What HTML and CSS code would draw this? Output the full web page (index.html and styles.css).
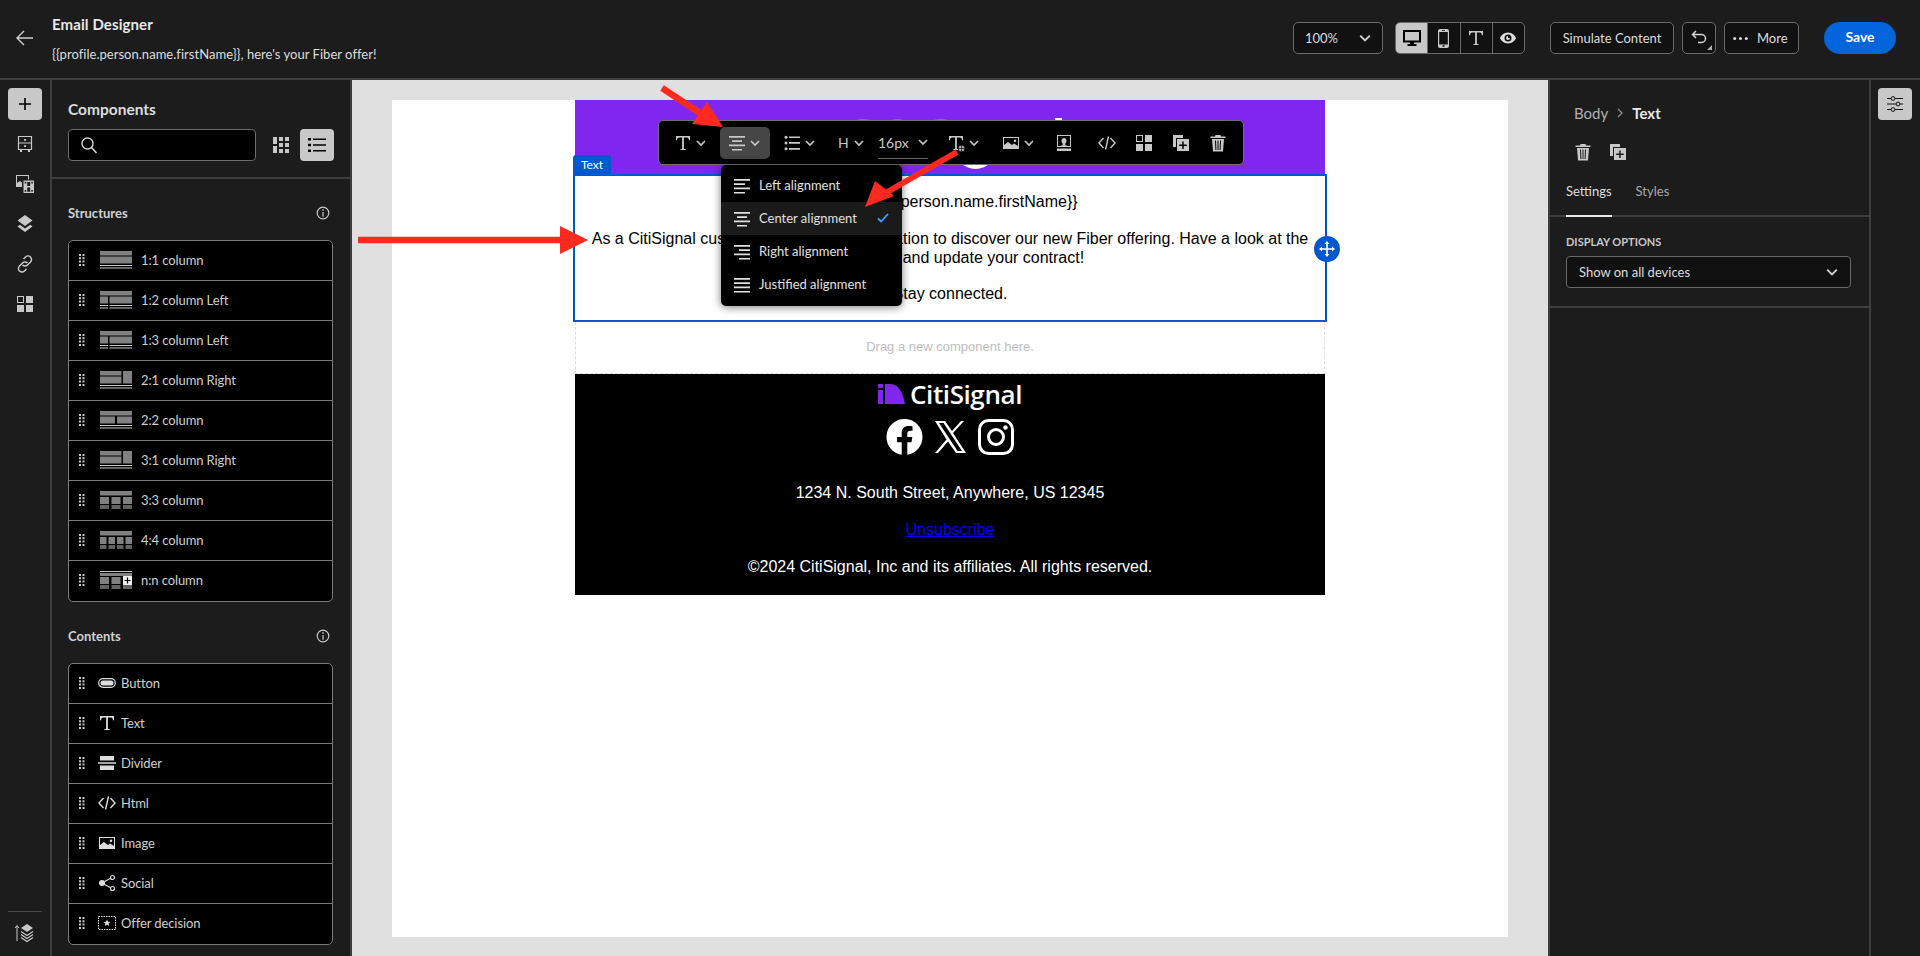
FILE: index.html

```html
<!DOCTYPE html>
<html lang="en">
<head>
  <meta charset="UTF-8">
  <meta name="viewport" content="width=device-width, initial-scale=1.0">
  <title>Email Designer</title>
  <link rel="stylesheet" href="styles.css">
</head>
<body>
  <!-- shared icons -->
  <svg class="defs">
    <symbol id="chev" viewBox="0 0 10 10"><path d="M1 3l4 4 4-4" fill="none" stroke="currentColor" stroke-width="1.600"/></symbol>
    <symbol id="t" viewBox="0 0 18 18"><path d="M2 2h14v4.200h-1c-.2-1.500-.8-2.600-2.200-2.600H9.900v11.200l1.800.4V16H6.300v-.8l1.800-.4V3.600H5.200C3.800 3.600 3.200 4.700 3 6.200H2z" fill="currentColor"/></symbol>
    <symbol id="al-left" viewBox="0 0 18 18"><path d="M1 2h16v1.700H1zM1 6.300h11v1.700H1zM1 10.600h16v1.700H1zM1 14.900h11v1.700H1z" fill="currentColor"/></symbol>
    <symbol id="al-center" viewBox="0 0 18 18"><path d="M1 2h16v1.700H1zM4 6.300h10v1.700H4zM1 10.600h16v1.700H1zM4 14.900h10v1.700H4z" fill="currentColor"/></symbol>
    <symbol id="al-right" viewBox="0 0 18 18"><path d="M1 2h16v1.700H1zM6 6.300h11v1.700H6zM1 10.600h16v1.700H1zM6 14.900h11v1.700H6z" fill="currentColor"/></symbol>
    <symbol id="al-just" viewBox="0 0 18 18"><path d="M1 2h16v1.700H1zM1 6.300h16v1.700H1zM1 10.600h16v1.700H1zM1 14.900h16v1.700H1z" fill="currentColor"/></symbol>
    <symbol id="list" viewBox="0 0 18 18"><path d="M0 2h3v2.500H0zM5 2.500h13V4H5zM0 7.800h3v2.500H0zM5 8.300h13v1.500H5zM0 13.500h3V16H0zM5 14h13v1.500H5z" fill="currentColor"/></symbol>
    <symbol id="bullets" viewBox="0 0 18 18"><circle cx="3" cy="3.200" r="1.500" fill="currentColor"/><circle cx="3" cy="9" r="1.500" fill="currentColor"/><circle cx="3" cy="14.800" r="1.500" fill="currentColor"/><path d="M6 2.400h11v1.700H6zM6 8.100h11v1.700H6zM6 14h11v1.700H6z" fill="currentColor"/></symbol>
    <symbol id="image" viewBox="0 0 18 18"><path fill-rule="evenodd" d="M1 3h16v12H1zM2 4v7l4-3 4 3 2-1.500 4 2.500V4zM13 5.500a1.300 1.300 0 110 2.600 1.300 1.300 0 010-2.600z" fill="currentColor"/></symbol>
    <symbol id="person" viewBox="0 0 18 18"><path fill-rule="evenodd" d="M2 1h14v12H2zM3 2v10h3c1-1 2-1 2-2-1-1-1.500-2-1.500-3.500C6.500 5 7.500 4 9 4s2.500 1 2.500 2.500c0 1.500-.5 2.500-1.500 3.500 0 1 1 1 2 2h3V2zM2 14.500h14V17H2z" fill="currentColor"/></symbol>
    <symbol id="code" viewBox="0 0 18 18"><path d="M5.500 4L1 9l4.500 5M12.500 4L17 9l-4.500 5M10.500 2.500L7.500 15.500" fill="none" stroke="currentColor" stroke-width="1.400"/></symbol>
    <symbol id="grid" viewBox="0 0 18 18"><path fill-rule="evenodd" d="M1 1h7v7H1zM2 2v5h5V2zM10 1h7v7h-7zM1 10h7v7H1zM10 10h7v7h-7z" fill="currentColor"/></symbol>
    <symbol id="copy" viewBox="0 0 18 18"><path fill-rule="evenodd" d="M1 1h10v3H4v9H1zM5 5h12v12H5zM10.200 7.500v3h-3V12h3v3h1.500v-3h3v-1.500h-3v-3z" fill="currentColor"/></symbol>
    <symbol id="trash" viewBox="0 0 18 18"><path fill-rule="evenodd" d="M6.500 1h5l.5 1.500h4.500V4h-15V2.500H6zM3 5h12l-1 12.500H4zM6 6.500l.4 9.500h1L7 6.500zM8.500 6.500V16h1V6.500zM11 6.500L10.600 16h1l.4-9.500z" fill="currentColor"/></symbol>
    <symbol id="info" viewBox="0 0 14 14"><circle cx="7" cy="7" r="5.800" fill="none" stroke="currentColor" stroke-width="1.200"/><path d="M6.300 3.300h1.400v1.400H6.300zM6.400 6h1.200v4.700H6.400z" fill="currentColor"/></symbol>
    <symbol id="drag" viewBox="0 0 6 12"><path d="M0 0h2v2H0zM3.500 0h2v2h-2zM0 3.300h2v2H0zM3.500 3.300h2v2h-2zM0 6.600h2v2H0zM3.500 6.600h2v2h-2zM0 9.900h2v2H0zM3.500 9.900h2v2h-2z" fill="#c8c8c8"/></symbol>

    <symbol id="st-1" viewBox="0 0 32 18"><path d="M0 0h32v4.500H0zM0 5.500h32v7H0z" fill="#808080"/><path d="M0 14h32v1H0zM0 16.500h32v1H0z" fill="#c4c4c4"/></symbol>
    <symbol id="st-12" viewBox="0 0 32 18"><path d="M0 0h32v4.500H0zM0 5.500h8v7H0zM9.500 5.500H32v7H9.500z" fill="#808080"/><path d="M0 14h8v1H0zM0 16.500h8v1H0zM9.500 14H32v1H9.500zM9.500 16.500H32v1H9.500z" fill="#c4c4c4"/></symbol>
    <symbol id="st-21" viewBox="0 0 32 18"><path d="M0 0h21.500v4.500H0zM23 0h9v12.500h-9zM0 5.500h21.500v7H0z" fill="#808080"/><path d="M0 14h32v1H0zM0 16.500h32v1H0z" fill="#c4c4c4"/></symbol>
    <symbol id="st-22" viewBox="0 0 32 18"><path d="M0 0h32v4.500H0zM0 5.500h15v7H0zM17 5.500h15v7H17z" fill="#808080"/><path d="M0 14h32v1H0zM0 16.500h32v1H0z" fill="#c4c4c4"/></symbol>
    <symbol id="st-33" viewBox="0 0 32 18"><path d="M0 0h32v4.500H0zM0 6h9v7H0zM11.500 6h9v7h-9zM23 6h9v7h-9z" fill="#808080"/><path d="M0 14.500h9v1H0zM0 16.500h9v1H0zM11.500 14.500h9v1h-9zM11.500 16.500h9v1h-9zM23 14.500h9v1h-9zM23 16.500h9v1h-9z" fill="#c4c4c4"/></symbol>
    <symbol id="st-44" viewBox="0 0 32 18"><path d="M0 0h32v4.500H0zM0 6h6.500v7H0zM8.500 6H15v7H8.500zM17 6h6.500v7H17zM25.500 6H32v7h-6.500z" fill="#808080"/><path d="M0 14.500h6.500v1H0zM0 16.500h6.500v1H0zM8.500 14.500H15v1H8.500zM8.500 16.500H15v1H8.500zM17 14.500h6.500v1H17zM17 16.500h6.500v1H17zM25.500 14.500H32v1h-6.500zM25.500 16.500H32v1h-6.500z" fill="#c4c4c4"/></symbol>
    <symbol id="st-nn" viewBox="0 0 32 18"><path d="M0 2h32v3H0zM0 6h9v7H0zM11.500 6h9v7h-9z" fill="#808080"/><path d="M0 0h32v1H0zM0 14.500h9v1H0zM0 16.500h9v1H0zM11.500 14.500h9v1h-9zM11.500 16.500h9v1h-9zM23 14.500h9v1h-9zM23 16.500h9v1h-9z" fill="#c4c4c4"/><path fill-rule="evenodd" d="M23 5h9v9h-9zM26.900 6.500v2.400h-2.400v1.200h2.400v2.400h1.200v-2.400h2.400V8.900h-2.400V6.500z" fill="#eee"/></symbol>
  </svg>

  <header class="topbar">
    <svg class="back" width="18" height="16" viewBox="0 0 18 16"><path d="M8 1L1 8l7 7M1 8h16" fill="none" stroke="#d0d0d0" stroke-width="1.400"/></svg>
    <div class="titles">
      <div class="app-title">Email Designer</div>
      <div class="subject">{{profile.person.name.firstName}}, here's your Fiber offer!</div>
    </div>
    <div class="top-actions">
      <div class="btn zoom-select">100% <svg class="chev-lg"><use href="#chev"/></svg></div>
      <div class="device-group">
        <span class="device on">
          <svg width="18" height="18" viewBox="0 0 18 18"><path fill-rule="evenodd" d="M0 1h18v12.500H11V15h2.500v2h-9v-2H7v-1.500H0zM2 3v8.500h14V3z" fill="#000"/></svg>
        </span>
        <span class="device">
          <svg width="11" height="19" viewBox="0 0 11 19"><path fill-rule="evenodd" d="M2 0h7a2 2 0 012 2v15a2 2 0 01-2 2H2a2 2 0 01-2-2V2a2 2 0 012-2zM1.200 3v12.500h8.600V3zM4 1.200v.8h3v-.8zM4.500 16.300v1.500h2v-1.500z" fill="#c8c8c8"/></svg>
        </span>
        <span class="device"><svg width="18" height="18"><use href="#t"/></svg></span>
        <span class="device">
          <svg width="18" height="18" viewBox="0 0 18 18"><path fill-rule="evenodd" d="M9 3.500c4 0 7 3 8 5.500-1 2.500-4 5.500-8 5.500S2 11.500 1 9c1-2.500 4-5.500 8-5.500zM9 5.500a3.500 3.500 0 100 7 3.500 3.500 0 000-7z" fill="#dcdcdc"/><path d="M9 7v2h2a2 2 0 11-2-2z" fill="#dcdcdc"/></svg>
        </span>
      </div>
      <div class="btn simulate">Simulate Content</div>
      <div class="btn undo">
        <svg width="18" height="18" viewBox="0 0 18 18"><path d="M6 2L2.500 5.500 6 9M3 5.500h8.500a4 4 0 010 8H8" fill="none" stroke="#d5d5d5" stroke-width="1.500"/></svg>
        <i class="corner"></i>
      </div>
      <div class="btn more">
        <svg width="15" height="5" viewBox="0 0 15 5"><circle cx="1.700" cy="2.500" r="1.500" fill="#dcdcdc"/><circle cx="7.500" cy="2.500" r="1.500" fill="#dcdcdc"/><circle cx="13.300" cy="2.500" r="1.500" fill="#dcdcdc"/></svg>
        More
      </div>
      <div class="save">Save</div>
    </div>
  </header>

  <main class="workspace">
    <nav class="rail">
      <div class="rail-btn on"><svg width="14" height="14" viewBox="0 0 14 14"><path d="M6.200 1h1.600v5.200H13v1.600H7.800V13H6.200V7.800H1V6.200h5.200z" fill="#000"/></svg></div>
      <div class="rail-btn">
        <svg width="18" height="18" viewBox="0 0 18 18"><path d="M2.500 1.500h13v13h-13zM2.500 8h13" fill="none" stroke="#c8c8c8" stroke-width="1.200"/><path d="M8 4h2v1.700H8zM8 10.300h2V12H8zM4 15h2v2H4zM12 15h2v2h-2z" fill="#c8c8c8"/></svg>
      </div>
      <div class="rail-btn">
        <svg width="18" height="18" viewBox="0 0 18 18"><path d="M0 0h13v4.500h-1V1H1v7l3-2 2 1.500V12H0z" fill="#c8c8c8"/><path fill-rule="evenodd" d="M7.500 5.500H18V18H7.500zM8.700 6.800v1.700h1.500V6.800zM15.300 6.800v1.700h1.500V6.800zM8.700 15v1.700h1.500V15zM15.300 15v1.700h1.500V15zM11.200 7v4h3V7zM11.200 12.500v4.200h3v-4.200z" fill="#c8c8c8"/></svg>
      </div>
      <div class="rail-btn">
        <svg width="18" height="20" viewBox="0 0 18 20"><path d="M9 1l7.500 5.500L9 12 1.500 6.500z" fill="#c8c8c8"/><path d="M1.500 12.500l2.300-1.700L9 14.600l5.200-3.800 2.300 1.700L9 18z" fill="#c8c8c8"/></svg>
      </div>
      <div class="rail-btn">
        <svg width="18" height="18" viewBox="0 0 18 18"><path d="M7.500 4l2-2a3.500 3.500 0 015 5l-3 3a3.500 3.500 0 01-5 0M10.500 14l-2 2a3.500 3.500 0 01-5-5l3-3a3.500 3.500 0 015 0" fill="none" stroke="#c8c8c8" stroke-width="1.500"/></svg>
      </div>
      <div class="rail-btn"><svg class="rail-grid" width="18" height="18"><use href="#grid"/></svg></div>
      <div class="rail-foot">
        <svg width="20" height="20" viewBox="0 0 20 20"><path d="M2 3v15M0 5l2-2.500L4 5" fill="none" stroke="#c8c8c8" stroke-width="1"/><path d="M12 1l6 4-6 4-6-4z" fill="#c8c8c8"/><path d="M6 8.500l6 4 6-4M6 11.500l6 4 6-4M6 14.500l6 4 6-4" fill="none" stroke="#c8c8c8" stroke-width="1.200"/></svg>
      </div>
    </nav>

    <aside class="components">
      <div class="comp-head">
        <div class="comp-title">Components</div>
        <div class="search-row">
          <div class="search">
            <svg width="18" height="18" viewBox="0 0 18 18"><circle cx="7.500" cy="7.500" r="5.500" fill="none" stroke="#d5d5d5" stroke-width="1.400"/><path d="M11.500 11.500l5 5.500" stroke="#d5d5d5" stroke-width="1.600"/></svg>
          </div>
          <svg class="view-grid" width="16" height="16" viewBox="0 0 16 16"><path d="M0 0h4v7H0zM6 0h4v4H6zM12 0h4v4h-4zM6 6h4v4H6zM12 6h4v4h-4zM0 9h4v7H0zM6 12h4v4H6zM12 12h4v4h-4z" fill="#c8c8c8"/></svg>
          <div class="view-list"><svg width="18" height="18"><use href="#list"/></svg></div>
        </div>
      </div>

      <div class="section">
        <div class="section-head">Structures <svg class="info"><use href="#info"/></svg></div>
        <ul class="items">
          <li><svg class="drag"><use href="#drag"/></svg><svg class="st"><use href="#st-1"/></svg>1:1 column</li>
          <li><svg class="drag"><use href="#drag"/></svg><svg class="st"><use href="#st-12"/></svg>1:2 column Left</li>
          <li><svg class="drag"><use href="#drag"/></svg><svg class="st"><use href="#st-12"/></svg>1:3 column Left</li>
          <li><svg class="drag"><use href="#drag"/></svg><svg class="st"><use href="#st-21"/></svg>2:1 column Right</li>
          <li><svg class="drag"><use href="#drag"/></svg><svg class="st"><use href="#st-22"/></svg>2:2 column</li>
          <li><svg class="drag"><use href="#drag"/></svg><svg class="st"><use href="#st-21"/></svg>3:1 column Right</li>
          <li><svg class="drag"><use href="#drag"/></svg><svg class="st"><use href="#st-33"/></svg>3:3 column</li>
          <li><svg class="drag"><use href="#drag"/></svg><svg class="st"><use href="#st-44"/></svg>4:4 column</li>
          <li><svg class="drag"><use href="#drag"/></svg><svg class="st"><use href="#st-nn"/></svg>n:n column</li>
        </ul>

        <div class="section-head second">Contents <svg class="info"><use href="#info"/></svg></div>
        <ul class="items contents">
          <li><svg class="drag"><use href="#drag"/></svg>
            <svg class="ci" viewBox="0 0 18 18"><rect x="0.700" y="4.700" width="16.600" height="8.600" rx="4.300" fill="none" stroke="#ddd" stroke-width="1.200"/><rect x="2.500" y="6.500" width="13" height="5" rx="2.500" fill="#ddd"/></svg>Button</li>
          <li><svg class="drag"><use href="#drag"/></svg><svg class="ci"><use href="#t"/></svg>Text</li>
          <li><svg class="drag"><use href="#drag"/></svg>
            <svg class="ci" viewBox="0 0 18 18"><path d="M2 2h14v4.500H2zM0 8.200h18v1.600H0zM2 11.500h14V16H2z" fill="#ddd"/></svg>Divider</li>
          <li><svg class="drag"><use href="#drag"/></svg><svg class="ci"><use href="#code"/></svg>Html</li>
          <li><svg class="drag"><use href="#drag"/></svg><svg class="ci"><use href="#image"/></svg>Image</li>
          <li><svg class="drag"><use href="#drag"/></svg>
            <svg class="ci" viewBox="0 0 18 18"><path d="M4 9L13 4M4 9l9 5" stroke="#ddd" stroke-width="1.300"/><circle cx="4" cy="9" r="3" fill="#ddd"/><circle cx="14.500" cy="3.500" r="2" fill="#000" stroke="#ddd" stroke-width="1.200"/><circle cx="14.500" cy="14.500" r="2" fill="#000" stroke="#ddd" stroke-width="1.200"/></svg>Social</li>
          <li><svg class="drag"><use href="#drag"/></svg>
            <svg class="ci" viewBox="0 0 18 18"><rect x="0.500" y="2.500" width="17" height="13" fill="none" stroke="#ddd" stroke-dasharray="1.500 1"/><path d="M9 5.500l1 2.300 2.500.2-1.900 1.600.6 2.400L9 10.700 6.800 12l.6-2.400L5.500 8 8 7.800z" fill="#ddd"/></svg>Offer decision</li>
        </ul>
      </div>
    </aside>

    <section class="canvas">
      <div class="page">
        <div class="email">
          <div class="hero">
            <!-- what shows of the logo around the toolbar -->
            <svg class="hero-art" width="750" height="74" viewBox="0 0 750 74">
              <circle cx="400.500" cy="47.500" r="21.500" fill="#fff"/>
              <rect x="480" y="18" width="7" height="10" fill="#fff"/>
              <ellipse cx="288" cy="21" rx="7" ry="2" fill="#fff" fill-opacity="0.25"/>
              <ellipse cx="322" cy="21" rx="6" ry="2" fill="#fff" fill-opacity="0.25"/>
              <ellipse cx="366" cy="21" rx="8" ry="2" fill="#fff" fill-opacity="0.25"/>
            </svg>
          </div>

          <div class="text-block">
            <span class="tag">Text</span>
            <p>Hi {{profile.person.name.firstName}}</p>
            <p class="offer-line">As a CitiSignal customer, you have an invitation to discover our new Fiber offering. Have a look at the latest offers and update your contract!</p>
            <p>Stay connected.</p>
            <span class="handle">
              <svg width="16" height="16" viewBox="0 0 16 16"><path d="M8 0l2.500 3H8.800v4.200H13V5.500L16 8l-3 2.500V8.800H8.800V13h1.700L8 16l-2.500-3h1.700V8.800H3v1.700L0 8l3-2.500v1.700h4.200V3H5.500z" fill="#fff"/></svg>
            </span>
          </div>

          <div class="dropzone">Drag a new component here.</div>

          <div class="footer">
            <div class="foot-logo">
              <svg width="27" height="20" viewBox="0 0 27 20"><path d="M0 0h5v4H0zM0 6h5v14H0zM7 0h5c7 0 12 5 15 20H7z" fill="#8026f0"/></svg>
              <span>CitiSignal</span>
            </div>
            <div class="socials">
              <svg width="37" height="36" viewBox="0 0 36 36"><path d="M36 18a18 18 0 10-20.800 17.800V23.200h-4.600V18h4.600v-4c0-4.500 2.700-7 6.800-7 2 0 4 .4 4 .4v4.400h-2.300c-2.200 0-2.900 1.400-2.900 2.800V18h5l-.8 5.200h-4.200v12.600A18 18 0 0036 18z" fill="#fff"/></svg>
              <svg width="31" height="32" viewBox="0 0 31 32"><path fill-rule="evenodd" d="M0 0h10l7 10L26 0h3L18 12l13 20H21l-8-11.500L3 32H0l11.500-13.500zM4 2l18.500 28H27L8.500 2z" fill="#fff"/></svg>
              <svg width="36" height="36" viewBox="0 0 36 36"><rect x="1.500" y="1.500" width="33" height="33" rx="9" fill="none" stroke="#fff" stroke-width="3"/><circle cx="18" cy="18" r="7.500" fill="none" stroke="#fff" stroke-width="3"/><circle cx="27.500" cy="8.500" r="2.200" fill="#fff"/></svg>
            </div>
            <p class="address">1234 N. South Street, Anywhere, US 12345</p>
            <p><a href="#">Unsubscribe</a></p>
            <p>&copy;2024 CitiSignal, Inc and its affiliates. All rights reserved.</p>
          </div>

          <div class="text-toolbar">
            <span class="tb"><svg class="ic"><use href="#t"/></svg><svg class="ch"><use href="#chev"/></svg></span>
            <span class="tb active ml14"><svg class="ic"><use href="#al-center"/></svg><svg class="ch"><use href="#chev"/></svg></span>
            <span class="tb ml13"><svg class="ic"><use href="#bullets"/></svg><svg class="ch"><use href="#chev"/></svg></span>
            <span class="tb ml23"><span class="h-label">H</span><svg class="ch"><use href="#chev"/></svg></span>
            <span class="tb size ml14">16px<svg class="ch"><use href="#chev"/></svg></span>
            <span class="tb ml19">
              <svg class="ic" viewBox="0 0 18 18"><use href="#t"/><circle cx="14.500" cy="14.500" r="3.500" fill="#aaa" stroke="#000" stroke-width="0.800"/><path d="M11 14.500h7M14.500 11v7" stroke="#000" stroke-width="0.600"/></svg>
              <svg class="ch"><use href="#chev"/></svg>
            </span>
            <span class="tb ml23"><svg class="ic"><use href="#image"/></svg><svg class="ch"><use href="#chev"/></svg></span>
            <span class="tb ml21"><svg class="ic"><use href="#person"/></svg></span>
            <span class="tb ml25"><svg class="ic"><use href="#code"/></svg></span>
            <span class="tb ml19"><svg class="ic"><use href="#grid"/></svg></span>
            <span class="tb ml19"><svg class="ic"><use href="#copy"/></svg></span>
            <span class="tb ml19"><svg class="ic"><use href="#trash"/></svg></span>
          </div>

          <ul class="align-menu">
            <li><svg class="ic"><use href="#al-left"/></svg>Left alignment</li>
            <li class="selected"><svg class="ic"><use href="#al-center"/></svg>Center alignment
              <svg class="check" width="12" height="10" viewBox="0 0 12 10"><path d="M1 5.500l3.200 3L11 1" fill="none" stroke="#4b9cf5" stroke-width="1.800"/></svg>
            </li>
            <li><svg class="ic"><use href="#al-right"/></svg>Right alignment</li>
            <li><svg class="ic"><use href="#al-just"/></svg>Justified alignment</li>
          </ul>
        </div>
      </div>
    </section>

    <aside class="props">
      <div class="crumbs">Body <svg width="8" height="10" viewBox="0 0 8 10"><path d="M2 1l4 4-4 4" fill="none" stroke="#909090" stroke-width="1.200"/></svg> <b>Text</b></div>
      <div class="prop-icons">
        <svg width="18" height="18"><use href="#trash"/></svg>
        <svg width="18" height="18"><use href="#copy"/></svg>
      </div>
      <div class="tabs"><span class="tab on">Settings</span><span class="tab">Styles</span></div>
      <div class="prop-section">
        <div class="prop-label">DISPLAY OPTIONS</div>
        <div class="prop-select">Show on all devices <svg class="chev-lg"><use href="#chev"/></svg></div>
      </div>
    </aside>

    <nav class="rail rail-right">
      <div class="rail-btn on">
        <svg width="18" height="18" viewBox="0 0 18 18"><path d="M1 3.500h16M1 9h16M1 14.500h16" stroke="#111" stroke-width="1"/><circle cx="7" cy="3.500" r="1.900" fill="#c8c8c8" stroke="#111"/><circle cx="12" cy="9" r="1.900" fill="#c8c8c8" stroke="#111"/><circle cx="7" cy="14.500" r="1.900" fill="#c8c8c8" stroke="#111"/></svg>
      </div>
    </nav>
  </main>

  <!-- annotation arrows drawn on top of the screenshot -->
  <svg class="arrows" width="1920" height="956" viewBox="0 0 1920 956">
    <path d="M662 88L700 113" stroke="#ff2a1f" stroke-width="6.500"/>
    <path d="M723 127L692 124 707 102z" fill="#ff2a1f"/>
    <path d="M957 152L882 195" stroke="#ff2a1f" stroke-width="6"/>
    <path d="M865 207L894 196 875 181z" fill="#ff2a1f"/>
    <path d="M358 240H565" stroke="#ff2a1f" stroke-width="6.500"/>
    <path d="M588 240L560 226V254z" fill="#ff2a1f"/>
  </svg>
</body>
</html>
```

FILE: styles.css

```css
* { box-sizing: border-box; }
html, body { margin: 0; height: 100%; }
body { position: relative; width: 1920px; height: 956px; overflow: hidden; background: #1c1c1c; color: #d8d8d8; font-family: Lato, "Noto Sans", sans-serif; font-size: 13px; }
ul { list-style: none; margin: 0; padding: 0; }
svg { display: block; flex: none; }
.defs { display: none; }
.arrows { position: absolute; top: 0; left: 0; pointer-events: none; }

/* top bar */
.topbar { display: flex; align-items: center; height: 80px; padding: 0 24px 2px 16px; border-bottom: 2px solid #3e3e3e; }
.back { margin-right: 18px; }
.titles { display: flex; flex-direction: column; gap: 12px; margin-top: 2px; }
.app-title { font-size: 15px; font-weight: 700; letter-spacing: 0.1px; color: #e8e8e8; line-height: 18px; }
.subject { font-size: 13px; letter-spacing: 0.03px; color: #dcdcdc; line-height: 18px; }
.top-actions { display: flex; align-items: center; margin-left: auto; height: 32px; }
.btn { display: flex; align-items: center; height: 32px; background: #111; border: 1px solid #6a6a6a; border-radius: 5px; font-size: 13px; color: #dcdcdc; }
.zoom-select { width: 90px; padding: 0 11px; justify-content: space-between; margin-right: 12px; }
.chev-lg { width: 12px; height: 12px; color: #d0d0d0; }
.device-group { display: flex; width: 130px; height: 32px; background: #111; border: 1px solid #6a6a6a; border-radius: 5px; overflow: hidden; margin-right: 25px; }
.device { display: flex; align-items: center; justify-content: center; flex: 1; border-left: 1px solid #6a6a6a; color: #c8c8c8; }
.device:first-child { border-left: none; }
.device.on { background: #c8c8c8; }
.simulate { width: 124px; justify-content: center; margin-right: 8px; }
.undo { position: relative; width: 34px; justify-content: center; margin-right: 8px; }
.corner { position: absolute; right: 3px; bottom: 3px; width: 0; height: 0; border-left: 5px solid transparent; border-bottom: 5px solid #b0b0b0; }
.more { width: 75px; padding-left: 8px; gap: 9px; margin-right: 25px; }
.save { width: 72px; height: 32px; line-height: 30px; text-align: center; background: #0265dc; border-radius: 16px; color: #fff; font-size: 14px; font-weight: 700; }

/* layout */
.workspace { display: flex; height: 876px; }
.rail { position: relative; width: 52px; padding: 8px 10px 0 8px; border-right: 2px solid #3e3e3e; }
.rail-btn { display: flex; align-items: center; justify-content: center; height: 32px; width: 34px; margin-bottom: 8px; color: #c8c8c8; }
.rail-btn.on { background: #c8c8c8; border-radius: 4px; }
.rail-foot { position: absolute; left: 8px; top: 831px; width: 34px; padding-top: 11px; border-top: 1px solid #4a4a4a; display: flex; justify-content: center; }
.rail-right { width: 51px; padding-left: 7px; border-right: none; border-left: 2px solid #3e3e3e; }

/* components panel */
.components { width: 300px; border-right: 2px solid #3e3e3e; }
.comp-head { height: 99px; padding: 19px 16px 0 16px; border-bottom: 2px solid #3e3e3e; }
.comp-title { font-size: 15.500px; font-weight: 700; line-height: 20px; margin-bottom: 10px; color: #dcdcdc; }
.search-row { display: flex; align-items: center; }
.search { display: flex; align-items: center; width: 188px; height: 32px; padding-left: 11px; background: #000; border: 1px solid #6a6a6a; border-radius: 4px; }
.view-grid { margin-left: 17px; }
.view-list { display: flex; align-items: center; justify-content: center; width: 34px; height: 32px; margin-left: 11px; background: #c8c8c8; border-radius: 4px; color: #000; }
.section { padding: 24px 17px 0 16px; }
.section-head { display: flex; align-items: center; justify-content: space-between; height: 20px; margin-bottom: 17px; padding-right: 3px; font-size: 13px; font-weight: 700; color: #d0d0d0; }
.section-head.second { margin-top: 24px; }
.info { width: 14px; height: 14px; color: #c8c8c8; }
.items { width: 265px; border: 1px solid #7a7a7a; border-radius: 5px; background: #000; }
.items li { display: flex; align-items: center; height: 40px; padding: 0 0 2px 10px; border-bottom: 1px solid #7a7a7a; color: #cfcfcf; font-size: 13px; letter-spacing: -0.1px; }
.items li:last-child { border-bottom: none; }
.drag { width: 6px; height: 12px; margin-right: 15px; }
.st { width: 32px; height: 18px; margin-right: 9px; }
.ci { width: 18px; height: 18px; margin-right: 5px; color: #ddd; margin-left: -2px; }

/* canvas */
.canvas { flex: 1; padding: 20px 40px 19px; background: #e0e0e0; }
.page { height: 100%; background: #fff; display: flex; justify-content: center; }
.email { position: relative; width: 750px; color: #000; font-family: "Liberation Sans", Arial, sans-serif; font-size: 16px; line-height: 19px; }
.hero { position: relative; height: 74px; background: #8026ee; overflow: hidden; }
.hero-art { position: absolute; left: 0; top: 0; }
.text-block { position: relative; height: 148px; margin: 0 -2px; padding: 16px 14px 0; border: 2px solid #0058d0; text-align: center; }
.text-block p { margin: 0 0 17px; line-height: 19.500px; }
.text-block .offer-line { margin-bottom: 16px; }
.tag { position: absolute; left: -2px; top: -21px; width: 38px; height: 20px; background: #0058d0; border-radius: 3px 3px 0 0; color: #fff; font-size: 12px; line-height: 20px; font-family: Lato, sans-serif; }
.handle { position: absolute; right: -15px; top: 60px; display: flex; align-items: center; justify-content: center; width: 26px; height: 26px; background: #0058d0; border-radius: 50%; }
.dropzone { height: 52px; border: 1px dashed #dcdcdc; border-top: none; text-align: center; line-height: 50px; font-size: 13px; color: #bdbdbd; }
.footer { height: 221px; padding-top: 8px; background: #000; color: #fff; text-align: center; }
.footer p { margin: 0 0 18px; }
.footer a { color: #0000ee; }
.footer .address { margin-top: 28px; }
.foot-logo { display: flex; align-items: center; justify-content: center; gap: 5px; height: 24px; font-family: "Open Sans", sans-serif; font-weight: 600; font-size: 26px; letter-spacing: -0.4px; }
.socials { display: flex; justify-content: center; align-items: center; gap: 12px; margin-top: 13px; height: 36px; }

/* floating text toolbar */
.text-toolbar { position: absolute; left: 83px; top: 20px; display: flex; align-items: center; width: 586px; height: 45px; padding-left: 15px; background: #000; border: 1px solid #707070; border-radius: 5px; color: #c8c8c8; font-family: Lato, sans-serif; font-size: 14px; }
.tb { display: flex; align-items: center; gap: 4px; }
.tb.active { height: 32px; padding: 0 10px 0 8px; background: #464646; border-radius: 5px; }
.ic { width: 18px; height: 18px; }
.ch { width: 10px; height: 10px; }
.h-label { width: 11px; margin-right: 1px; }
.tb.size { justify-content: space-between; width: 50px; height: 32px; border-bottom: 1px solid #666; gap: 0; }
.ml13 { margin-left: 13px; }
.ml14 { margin-left: 14px; }
.ml19 { margin-left: 19px; }
.ml21 { margin-left: 21px; }
.ml23 { margin-left: 23px; }
.ml25 { margin-left: 25px; }

.align-menu { position: absolute; left: 146px; top: 65px; width: 181px; height: 141px; padding-top: 4px; background: #000; border-radius: 5px; box-shadow: 0 1px 8px rgba(0,0,0,0.55); color: #e0e0e0; font-family: Lato, sans-serif; font-size: 13px; }
.align-menu li { position: relative; display: flex; align-items: center; gap: 8px; height: 33px; padding-left: 12px; }
.align-menu li.selected { background: #1a1a1a; }
.check { position: absolute; left: 156px; top: 11px; }

/* properties panel */
.props { width: 321px; border-left: 2px solid #3e3e3e; }
.crumbs { display: flex; align-items: center; gap: 8px; height: 20px; margin: 23px 0 0 24px; font-size: 15px; color: #b0b0b0; }
.crumbs b { color: #e8e8e8; }
.prop-icons { display: flex; gap: 17px; margin: 20px 0 0 24px; color: #c8c8c8; }
.tabs { display: flex; gap: 24px; height: 45px; margin-top: 11px; padding: 0 16px; border-bottom: 2px solid #3e3e3e; }
.tab { position: relative; height: 43px; padding-top: 11px; color: #a8a8a8; font-size: 13px; }
.tab.on { color: #dcdcdc; }
.tab.on::after { content: ""; position: absolute; left: 0; right: 0; bottom: -2px; height: 2px; background: #e8e8e8; }
.prop-section { height: 91px; padding: 17px 18px 0 16px; border-bottom: 2px solid #3e3e3e; }
.prop-label { height: 15px; margin-bottom: 7px; font-size: 11px; font-weight: 700; line-height: 15px; color: #c8c8c8; }
.prop-select { display: flex; align-items: center; justify-content: space-between; height: 32px; padding: 0 12px; background: #111; border: 1px solid #6a6a6a; border-radius: 4px; font-size: 13px; color: #dcdcdc; }
```
